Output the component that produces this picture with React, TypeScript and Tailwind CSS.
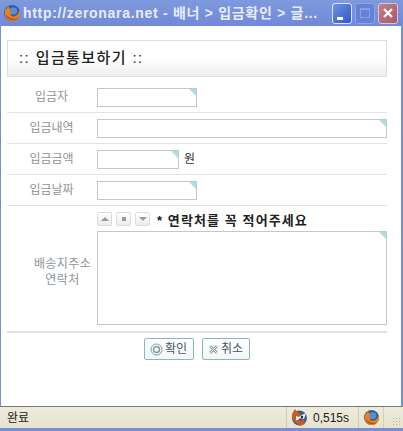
import React from "react";

const kr = "font-['Liberation_Sans','Noto_Sans_CJK_KR',sans-serif]";

function FirefoxIcon({ size = 18 }: { size?: number }) {
  return (
    <svg width={size} height={size} viewBox="0 0 18 18">
      <circle cx="9" cy="9" r="8" fill="#2f5fa8" />
      <circle cx="10.5" cy="7" r="3.6" fill="#5c8fd0" />
      <path
        d="M2.2 5.5C.6 10 3 16.8 9 17c4.6.1 8-3.4 8-7.6 0-1.6-.5-3-1-3.6.2 2.2-.6 5-3.4 6.2-2.6 1.1-5.2.2-6-2 1 .8 2.2.8 3 .2-1.6-.4-2.6-1.4-2.4-2.6C6.400 6.600 7.500 6 8 5 6.500 4.800 5.400 3.600 5.600 2 4.400 2.800 3.800 4.200 3.800 5.200 3.200 5 2.600 5.100 2.200 5.500Z"
        fill="#e8821e"
      />
      <path d="M3 10c.4 3 2.800 6 6.400 6.200 2.400.1 4.600-1 5.800-2.800-2 1.400-5 1.800-7.400.6C5.800 13 4 11.800 3 10Z" fill="#c9500f" />
    </svg>
  );
}

function FoxIcon() {
  return (
    <svg width="17" height="19" viewBox="0 0 17 19">
      <circle cx="8.500" cy="10" r="7.500" fill="#3b5f94" />
      <path d="M5 4 9 8 15 5 13 11 9 10 5 14 2 9Z" fill="#f2f2f2" />
      <path d="M1 6 4 1 7 5 11 7 8 9 5 8 5 12 9 13 13 12 14 16 9 18 5 15 2 12Z" fill="#cf5a1d" />
      <circle cx="11" cy="9" r="1.200" fill="#222" />
    </svg>
  );
}

function CornerInput({ className }: { className: string }) {
  return (
    <div className={`relative border border-[#c6c6c6] bg-white ${className}`}>
      <div className="absolute top-0 right-0 w-0 h-0 border-l-[7px] border-l-transparent border-t-[7px] border-t-[#a8e0e8]" />
    </div>
  );
}

function Row({ label, children }: { label: string; children: React.ReactNode }) {
  return (
    <div className="flex items-center h-[31px] border-b border-[#e2e2e2]">
      <div className="w-[90px] pr-[1px] text-center text-[12px] leading-none text-[#8d9499]">{label}</div>
      {children}
    </div>
  );
}

function ArrowButton({ children }: { children: React.ReactNode }) {
  return (
    <div className="w-[15px] h-[14px] flex items-center justify-center rounded-[2px] border border-[#dcdcdc] bg-gradient-to-b from-white to-[#ececec]">
      {children}
    </div>
  );
}

function ActionButton({ className, icon, label }: { className: string; icon: React.ReactNode; label: string }) {
  return (
    <div className={`h-[22px] flex items-center justify-center gap-[2px] rounded-[2px] border border-[#8fb5b5] bg-gradient-to-b from-white to-[#f1f6f6] text-[12px] text-[#4a5a5c] ${className}`}>
      {icon}
      <span>{label}</span>
    </div>
  );
}

export default function App() {
  return (
    <div className={`w-[403px] h-[431px] flex flex-col overflow-hidden bg-[#7a8ed6] ${kr}`}>
      {/* title bar */}
      <div className="h-[26px] shrink-0 flex items-center bg-gradient-to-b from-[#7f99de] to-[#7189d6] pl-[3px] pr-[2px]">
        <FirefoxIcon />
        <div className="ml-[2px] w-[308px] whitespace-nowrap overflow-hidden text-[14px] font-bold text-[#e6ecfa] tracking-[0.7px]">
          http://zeronara.net - 배너 &gt; 입금확인 &gt; 글...
        </div>
        <div className="ml-[1px] flex gap-[3px]">
          <div className="relative w-[20px] h-[21px] rounded-[3px] border border-[#dbe4f7] bg-gradient-to-br from-[#6d92e4] to-[#3158c4]">
            <div className="absolute left-[4px] bottom-[3px] w-[6px] h-[3px] bg-white" />
          </div>
          <div className="w-[20px] h-[21px] flex items-center justify-center rounded-[3px] border border-[#8ea4e2] bg-[#6583d6]">
            <div className="w-[10px] h-[10px] border border-[#88a0e4] border-t-2" />
          </div>
          <div className="w-[20px] h-[21px] flex items-center justify-center rounded-[3px] border border-[#e0c5cc] bg-gradient-to-br from-[#c47f88] to-[#a85a6a]">
            <svg width="12" height="12" viewBox="0 0 12 12">
              <path d="M2 2 10 10M10 2 2 10" stroke="#fff" strokeWidth="2.200" />
            </svg>
          </div>
        </div>
      </div>

      {/* page */}
      <div className="flex-1 mx-[1px] mr-[2px] bg-white px-[6px] pt-[14px] pr-[14px]">
        <div className="h-[37px] flex items-center pl-[11px] border border-[#dddddd] bg-gradient-to-b from-white from-50% to-[#eeeeee] text-[15px] font-medium text-[#222] tracking-[1.4px]">
          :: 입금통보하기 ::
        </div>

        <div className="h-[5px] border-b-0" />
        <Row label="입금자">
          <CornerInput className="w-[100px] h-[19px]" />
        </Row>
        <Row label="입금내역">
          <CornerInput className="w-[290px] h-[19px]" />
        </Row>
        <Row label="입금금액">
          <CornerInput className="w-[82px] h-[19px]" />
          <span className="ml-[5px] text-[12px] text-[#333]">원</span>
        </Row>
        <Row label="입금날짜">
          <CornerInput className="w-[100px] h-[19px]" />
        </Row>

        {/* address row */}
        <div className="flex h-[127px] border-b-2 border-[#e2e2e2]">
          <div className="w-[90px] pl-[21px] pt-[7px] flex flex-col justify-center text-center text-[12px] leading-[16px] tracking-[0.4px] text-[#8d9499]">
            <span className="whitespace-nowrap">배송지주소</span>
            <span>연락처</span>
          </div>
          <div className="flex flex-col pt-[6px]">
            <div className="h-[19px] flex items-start gap-[4px]">
              <ArrowButton>
                <div className="w-0 h-0 border-x-[4px] border-x-transparent border-b-[4px] border-b-[#9a9a9a]" />
              </ArrowButton>
              <ArrowButton>
                <div className="w-[4px] h-[4px] bg-[#9a9a9a]" />
              </ArrowButton>
              <ArrowButton>
                <div className="w-0 h-0 border-x-[4px] border-x-transparent border-t-[4px] border-t-[#9a9a9a]" />
              </ArrowButton>
              <span className="ml-[3px] mt-[1px] text-[13px] leading-[16px] font-bold text-[#222] whitespace-nowrap tracking-[1.1px]">
                * 연락처를 꼭 적어주세요
              </span>
            </div>
            <CornerInput className="w-[290px] h-[94px]" />
          </div>
        </div>

        {/* buttons */}
        <div className="flex justify-center gap-[8px] pt-[5px] pr-[1px]">
          <ActionButton
            className="w-[50px]"
            label="확인"
            icon={
              <svg width="13" height="13" viewBox="0 0 13 13" fill="none" stroke="#7c9a9a">
                <circle cx="6.500" cy="6.500" r="5.500" />
                <circle cx="6.500" cy="6.500" r="3" strokeWidth="1.500" />
              </svg>
            }
          />
          <ActionButton
            className="w-[48px]"
            label="취소"
            icon={
              <svg width="11" height="11" viewBox="0 0 11 11">
                <path d="M2 2 9 9M9 2 2 9" stroke="#8fa6a6" strokeWidth="2.800" />
                <path d="M2 2 9 9M9 2 2 9" stroke="#e6eeee" strokeWidth="1" />
              </svg>
            }
          />
        </div>
      </div>

      {/* status bar */}
      <div className="h-[22px] shrink-0 mb-[3px] flex items-center border-t border-[#777] bg-gradient-to-b from-[#eeebdb] to-[#e6e3d0] text-[12px] text-[#222]">
        <span className="flex-1 pl-[7px]">완료</span>
        <div className="h-full flex items-center gap-[5px] pl-[4px] w-[72px] border-l border-[#cfccb8]">
          <FoxIcon />
          <span>0,515s</span>
        </div>
        <div className="h-full flex items-center pl-[4px] w-[25px] border-l border-[#cfccb8]">
          <FirefoxIcon size={17} />
        </div>
        <div className="h-full w-[20px] border-l border-[#cfccb8] flex items-end justify-end p-[2px]">
          <div className="w-[9px] h-[9px] bg-[radial-gradient(#b8b4a0_1px,transparent_1px)] bg-[length:3px_3px]" />
        </div>
      </div>
    </div>
  );
}
